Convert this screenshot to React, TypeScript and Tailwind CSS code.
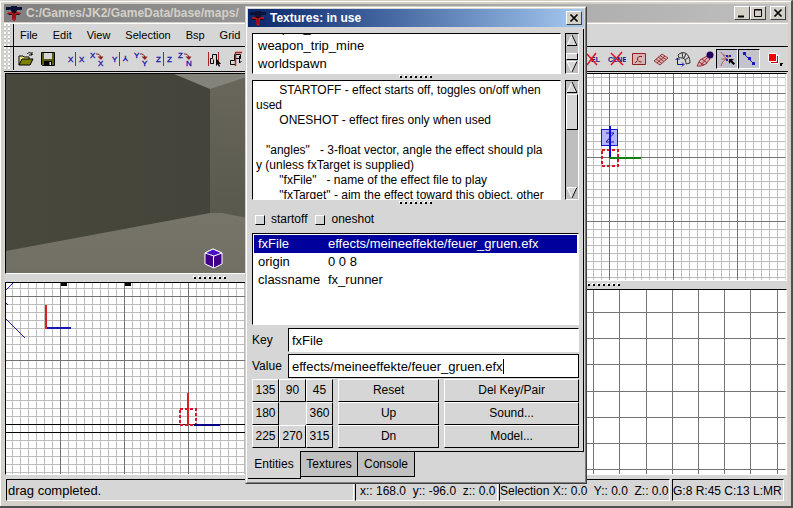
import React from "react";
import { clsx } from "clsx";

const sunken = "border border-t-black border-l-black border-b-white border-r-white";
const raised = "border border-t-white border-l-white border-b-black border-r-black";

function AppLogo() {
  return (
    <svg width="16" height="16" viewBox="0 0 16 16" className="shrink-0" aria-hidden="true">
      <path d="M0 2h5v-1h6v1h5v3h-5v1h-6v-1h-5z" fill="#0a1238" />
      <path d="M1 8h3l2-2h4l2 2h3l-2 2h-3v4l-2 2-2-2v-4h-3z" fill="#240810" />
      <path d="M2 8h3l2 1v5l1 1 1-1v-5l2-1h3" fill="none" stroke="#d81820" strokeWidth="1.3" />
    </svg>
  );
}

function WindowButton({ label, children }: { label: string; children: React.ReactNode }) {
  return (
    <button
      type="button"
      aria-label={label}
      className="flex h-3.5 w-4 items-center justify-center border border-t-white border-l-white border-b-[#404040] border-r-[#404040] bg-[#d4d0c8]"
    >
      <svg width="12" height="10" viewBox="0 0 12 10" fill="none" stroke="#000">
        {children}
      </svg>
    </button>
  );
}

const closeGlyph = <path d="M2.5 1.5l7 7M9.5 1.5l-7 7" strokeWidth="1.7" />;

function Grip() {
  return (
    <div className="w-2 bg-[radial-gradient(circle_at_1px_1px,#fff_1px,#a8a8a8_1px,#d6d6d6_2px)] bg-[size:4px_4px]" />
  );
}

function Dots({ className }: { className?: string }) {
  return (
    <svg width="34" height="4" viewBox="0 0 34 4" className={className} aria-hidden="true">
      {[0, 1, 2, 3, 4, 5, 6].map((i) => (
        <g key={i}>
          <rect x={i * 5} y="0" width="2" height="2" fill="#fff" />
          <rect x={i * 5 + 1} y="1" width="2" height="2" fill="#000" />
        </g>
      ))}
    </svg>
  );
}

function Tool({ label, pressed, children }: { label: string; pressed?: boolean; children: React.ReactNode }) {
  return (
    <button
      type="button"
      aria-label={label}
      aria-pressed={pressed}
      className={clsx(
        "flex h-5 w-[22px] shrink-0 items-center justify-center",
        pressed && "border border-t-black border-l-black border-b-white border-r-white bg-[#c3c3ce]",
      )}
    >
      <svg width="18" height="18" viewBox="0 0 18 18" className="shrink-0" fill="none">
        {children}
      </svg>
    </button>
  );
}

function Letter({ x, y, children }: { x: number; y: number; children: string }) {
  return (
    <text x={x} y={y} fontSize="8" fill="#1010a0" stroke="#1010a0" strokeWidth="0.3" fontFamily="Liberation Sans, sans-serif">
      {children}
    </text>
  );
}

function FlipIcon({ axis }: { axis: string }) {
  return (
    <>
      <Letter x={1} y={12}>{axis}</Letter>
      <g transform={axis === "Y" ? "rotate(180 14.5 9)" : undefined}>
        <Letter x={12} y={12}>{axis}</Letter>
      </g>
      <path d="M8.500 2v14" stroke="#b02020" />
    </>
  );
}

function RotateIcon({ axis, turned }: { axis: string; turned: string }) {
  return (
    <>
      <Letter x={1} y={8}>{axis}</Letter>
      <Letter x={9} y={16}>{turned}</Letter>
      <path d="M7 4c3-.5 4.500 1 5 4" stroke="#902020" />
      <path d="M8.500 6.500h6l-2.500 3.500z" fill="#902020" />
    </>
  );
}

function Toolbar() {
  return (
    <div className="flex h-[25px] border-b border-black bg-[#d6d6d6] pb-px">
      <Grip />
      <div className="ml-px flex flex-1 items-center justify-between border-l border-black">
        <div className="flex items-center pl-px">
          <Tool label="Open">
            <path d="M2 15V6h4l1 1h5v3" fill="#e8e480" stroke="#000" />
            <path d="M2 15l3-6h11l-3 6z" fill="#808000" stroke="#000" />
            <path d="M10 4c2-2 4-2 5 1M15 2v3h-3" stroke="#000" />
          </Tool>
          <Tool label="Save">
            <path d="M2.500 2.500h13v13h-12l-1-1z" fill="#5a5a14" stroke="#000" />
            <path d="M5 3h8v6h-8z" fill="#d6d6d6" />
            <path d="M5 11h8v5h-8z" fill="#000" />
            <path d="M10.500 12h1.500v3h-1.500z" fill="#d6d6d6" />
          </Tool>
          <div className="w-1.5" />
          <Tool label="Flip X"><FlipIcon axis="X" /></Tool>
          <Tool label="Rotate X"><RotateIcon axis="X" turned="X" /></Tool>
          <Tool label="Flip Y"><FlipIcon axis="Y" /></Tool>
          <Tool label="Rotate Y"><RotateIcon axis="Y" turned="Y" /></Tool>
          <Tool label="Flip Z"><FlipIcon axis="Z" /></Tool>
          <Tool label="Rotate Z"><RotateIcon axis="Z" turned="N" /></Tool>
          <div className="w-1.5" />
          <Tool label="Select complete tall">
            <path d="M3.500 2v14M13.500 2v14" stroke="#b02020" />
            <path d="M5.500 8.500h2v-4h4v9M5.500 8.500v5h3v-4" stroke="#000" />
            <path d="M11 8v8l2-2 1 3 1-1-1-2h2z" fill="#000" />
          </Tool>
          <Tool label="Select touching">
            <path d="M3.500 10.500h4v-6h6v4M3.500 10.500v4h5v-6h5" stroke="#000" />
            <path d="M8 2.500h7M8.500 3v13" stroke="#b02020" strokeWidth="1.500" />
            <path d="M12.500 6v7l2-2" stroke="#000" />
          </Tool>
        </div>
        <div className="flex items-center pr-0.5">
          <Tool label="Disable model selection">
            <text x="5" y="12" fontSize="7" fontWeight="bold" fill="#101080" fontFamily="Liberation Sans, sans-serif">EL</text>
            <path d="M1 4l10 11M10 3L1 15" stroke="#d81820" strokeWidth="1.500" />
          </Tool>
          <Tool label="Disable curve selection">
            <text x="0" y="12" fontSize="7" fontWeight="bold" fill="#101080" fontFamily="Liberation Sans, sans-serif">CLNE</text>
            <path d="M3 3l12 12M14 2L3 15" stroke="#e01020" strokeWidth="1.500" />
          </Tool>
          <Tool label="Patch bend mode">
            <path d="M2.500 3.500h13v11h-13z" fill="#dcb4b4" stroke="#902020" />
            <path d="M12 6.500c-3-.5-4.500.5-4.500 2.500s1.500 3 4 3M5 13l2-2" stroke="#702020" />
          </Tool>
          <Tool label="Patch mesh">
            <path d="M2 11l8-7 6 4-8 7zM4 9l6 4.500M6 7l6 4.500M8 5.500l6 4M5 13l8-7" fill="#e0b0b0" stroke="#802020" strokeWidth="0.800" />
          </Tool>
          <Tool label="Patch cap">
            <path d="M4 5c5-5 12-2 12 8l-4 1c0-5-3-7-7-6zM8 2.500l1 5.500M12 3.500l-2 5M15 7l-4 3" fill="#d6d6d6" stroke="#202020" strokeWidth="0.900" />
            <path d="M3.500 8v6.500h6M1.500 10l2-2 2 2M8 12.500l2 2-2 2" stroke="#1010a0" />
          </Tool>
          <Tool label="Patch weld">
            <path d="M1 16l3-6 7-4 3 3-4 5-5 2zM3 12l5 3M6 9l5 4M5 15l6-7" fill="#e0b0b0" stroke="#902030" strokeWidth="0.900" />
            <circle cx="14" cy="5" r="3.500" fill="#240060" />
          </Tool>
          <Tool label="Select vertices" pressed>
            <path d="M3 2c1 3 5 4 9 4M3 16c1-4 4-7 9-10M3 9h6M5 5l6 7" stroke="#b04040" strokeWidth="0.800" />
            <path d="M8 5h2v2h-2zM11 5h2v2h-2zM8 9h2v2h-2z" fill="#2020c0" />
            <path d="M11 9h5l-2 1.500 3 3-1.500 1.500-3-3-1.500 2z" fill="#000" />
          </Tool>
          <Tool label="Select edges" pressed>
            <path d="M4 4l10 10" stroke="#2020c0" />
            <path d="M3 2h3v3h-3zM8 7h3v3h-3zM12 12h3v3h-3z" fill="#1818c8" />
          </Tool>
          <div className="w-1" />
          <Tool label="Texture mode">
            <path d="M4.500 5.500h8v8h-8z" fill="#c00010" stroke="#fff" />
            <path d="M2.500 3.500h8v8h-8z" fill="#f00008" stroke="#fff" />
            <path d="M14 13h3v1h-1v2h-2z" fill="#000" />
          </Tool>
        </div>
      </div>
    </div>
  );
}

function CameraView() {
  return (
    <svg width="100%" height="100%" className="block bg-[#47463b]" role="img" aria-label="Camera view">
      <defs>
        <linearGradient id="wallLeft" x1="0" x2="1">
          <stop offset="0" stopColor="#49483d" />
          <stop offset="1" stopColor="#45443a" />
        </linearGradient>
        <linearGradient id="wallRight" x1="0" x2="0" y1="0" y2="1">
          <stop offset="0" stopColor="#69675b" />
          <stop offset="1" stopColor="#57564b" />
        </linearGradient>
        <linearGradient id="floor" x1="0" x2="0" y1="0" y2="1">
          <stop offset="0" stopColor="#77756a" />
          <stop offset="1" stopColor="#68665b" />
        </linearGradient>
      </defs>
      <rect width="206" height="200" fill="url(#wallLeft)" />
      <rect x="204" width="300" height="170" fill="url(#wallRight)" />
      <path d="M168 0L204 15L250 0z" fill="#84837a" />
      <path d="M0 177L204 139L216 139L420 178V300H0z" fill="url(#floor)" />
      <g stroke="#fff" strokeLinejoin="round">
        <path d="M199 179l8-4 9 4v11l-8 4-9-4z" fill="#40008c" />
        <path d="M199 179l9 3 8-3-9-4z" fill="#4a10c8" />
        <path d="M207.500 182v12" />
      </g>
    </svg>
  );
}

function GridPatterns({ id, x, y }: { id: string; x: number; y: number }) {
  return (
    <defs>
      <pattern id={id + "Minor"} x={x} y={y} width="8" height="8" patternUnits="userSpaceOnUse">
        <path d="M0 0h8v1h-7v7h-1z" fill="#bcbcbc" />
      </pattern>
      <pattern id={id + "Major"} x={x} y={y} width="64" height="64" patternUnits="userSpaceOnUse">
        <path d="M0 0h64v1h-63v63h-1z" fill="#747474" />
      </pattern>
    </defs>
  );
}

function FrontView() {
  return (
    <svg width="100%" height="100%" className="block" role="img" aria-label="XZ view">
      <GridPatterns id="front" x={54} y={13} />
      <rect width="100%" height="100%" fill="url(#frontMinor)" />
      <rect width="100%" height="100%" fill="url(#frontMajor)" />
      <path d="M55 0h6v3h-6zM119 0h6v3h-6z" fill="#000" />
      <path d="M0 7l7-7M0 36l19 19M0 20l2 2" stroke="#1c1ca8" />
      <rect x="39" y="22" width="2" height="24" fill="#d82020" />
      <rect x="41" y="44" width="24" height="2" fill="#1818b0" />
      <rect y="141" width="100%" height="1" fill="#000" />
      <rect y="149" width="100%" height="1" fill="#000" />
      <rect x="174" y="126" width="16" height="16" fill="none" stroke="#d01828" strokeWidth="2" strokeDasharray="3 2" />
      <rect x="181" y="110" width="2" height="32" fill="#d82020" />
      <rect x="188" y="141" width="26" height="2" fill="#000080" />
    </svg>
  );
}

function TopView() {
  return (
    <svg width="100%" height="100%" className="block" role="img" aria-label="YZ view">
      <GridPatterns id="side" x={188} y={19} />
      <rect width="100%" height="100%" fill="url(#sideMinor)" />
      <rect width="100%" height="100%" fill="url(#sideMajor)" />
      <rect x="180.500" y="55.500" width="16" height="16" fill="#b4b4ff" stroke="#1818d0" />
      <path d="M185 59h8l-8 9h8" fill="none" stroke="#1818a0" />
      <rect x="181" y="76" width="16" height="16" fill="none" stroke="#d01828" strokeWidth="2" strokeDasharray="3 2" />
      <rect x="188" y="52" width="2" height="32" fill="#0808e0" />
      <rect x="189" y="83" width="31" height="2" fill="#108010" />
    </svg>
  );
}

function TextureView() {
  const steps = Array.from({ length: 40 }, (_, i) => Math.round(15 + i * 26.200));
  return (
    <svg width="100%" height="100%" className="block" role="img" aria-label="Texture view">
      {steps.map((p) => (
        <g key={p} fill="#747474">
          <rect x={p} y="0" width="1" height="100%" />
          <rect x="0" y={p + 7} width="100%" height="1" />
        </g>
      ))}
    </svg>
  );
}

function Pane({ className, children }: { className: string; children: React.ReactNode }) {
  return (
    <div className={clsx("min-h-0 overflow-hidden border border-t-black border-l-black border-b-white border-r-white bg-white", className)}>
      {children}
    </div>
  );
}

function Splitter() {
  return (
    <div className="flex h-2 items-center justify-center">
      <Dots />
    </div>
  );
}

function Scrollbar({ thumb }: { thumb: string }) {
  return (
    <div className="flex w-3.5 flex-col border border-t-black border-l-black border-b-white border-r-white bg-[#bebebe]">
      <svg width="12" height="13" viewBox="0 0 12 13" className="shrink-0" aria-hidden="true">
        <path d="M6 1L1 11.500H11z" fill="#d6d6d6" stroke="#fff" />
        <path d="M6 1L11 11.500H1" fill="none" stroke="#000" />
      </svg>
      <div className={clsx("bg-[#d6d6d6]", raised, thumb)} />
      <svg width="12" height="13" viewBox="0 0 12 13" className="mt-auto shrink-0" aria-hidden="true">
        <path d="M1 1.500H11L6 12z" fill="#d6d6d6" stroke="#fff" />
        <path d="M11 1.500L6 12" stroke="#000" />
      </svg>
    </div>
  );
}

const pairs = [
  ["fxFile", "effects/meineeffekte/feuer_gruen.efx"],
  ["origin", "0 0 8"],
  ["classname", "fx_runner"],
];

const angles = ["135", "90", "45", "180", "", "360", "225", "270", "315"];

const help = [
  "       STARTOFF - effect starts off, toggles on/off when",
  "used",
  "       ONESHOT - effect fires only when used",
  "",
  "   \"angles\"   - 3-float vector, angle the effect should pla",
  "y (unless fxTarget is supplied)",
  "       \"fxFile\"   - name of the effect file to play",
  "       \"fxTarget\" - aim the effect toward this object, other",
];

function PushButton({ children, className }: { children: string; className?: string }) {
  return (
    <button type="button" className={clsx("h-[23px] bg-[#d6d6d6] text-center", raised, className)}>
      {children}
    </button>
  );
}

function Spawnflag({ name }: { name: string }) {
  return (
    <label className="flex items-center gap-1.5">
      <input
        type="checkbox"
        className="size-2.5 appearance-none border border-t-white border-l-white border-b-black border-r-black bg-[#d6d6d6]"
      />
      {name}
    </label>
  );
}

function EntityDialog() {
  return (
    <section
      aria-label="Textures: in use"
      className="absolute top-[5px] left-[245px] w-[342px] border border-t-[#d4d0c8] border-l-[#d4d0c8] border-b-[#404040] border-r-[#404040] bg-[#d6d6d6]"
    >
      <div className="border border-t-white border-l-white border-b-[#808080] border-r-[#808080] p-px">
        <header className="flex h-[18px] items-center gap-1 bg-linear-to-r from-[#0a246a] to-[#a6caf0] pr-0.5 pl-0.5 font-bold text-white">
          <AppLogo />
          <h2 className="flex-1">Textures: in use</h2>
          <WindowButton label="Close">{closeGlyph}</WindowButton>
        </header>

        <div className="mt-0.5 border-r border-b border-black pt-1 pr-[3px] pb-[3px] pl-1">
          <div className="flex h-[41px] gap-1 pr-px">
            <ul className={clsx("flex flex-1 flex-col justify-end overflow-hidden bg-white text-[13px] leading-[18px]", sunken)}>
              {["weapon_thermal", "weapon_trip_mine", "worldspawn"].map((name) => (
                <li key={name} className="h-[18px] shrink-0 pl-[5px]">{name}</li>
              ))}
            </ul>
            <Scrollbar thumb="mt-1.5 h-2" />
          </div>
          <div className="flex h-[6px] items-center justify-center">
            <Dots />
          </div>
          <div className="flex h-[120px] gap-1 pr-px">
            <div className={clsx("flex-1 overflow-hidden bg-white pt-0.5 pl-[3px] leading-[15px] whitespace-pre", sunken)}>
              {help.map((line, i) => (
                <p key={i} className="h-[15px]">{line}</p>
              ))}
            </div>
            <Scrollbar thumb="h-9" />
          </div>
          <div className="flex h-[6px] items-center justify-center">
            <Dots />
          </div>

          <div className="flex h-[27px] items-center gap-2 pl-[3px]">
            <Spawnflag name="startoff" />
            <Spawnflag name="oneshot" />
          </div>

          <div className={clsx("mr-px h-[92px] bg-white p-px", sunken)}>
            <table className="w-full text-left text-[13px] leading-[18px]">
              <tbody>
                {pairs.map(([key, value], i) => (
                  <tr key={key} className={clsx("h-[18px]", i === 0 && "bg-[#00009c] text-white")}>
                    <th scope="row" className="w-[74px] p-0 pl-1 font-normal">{key}</th>
                    <td className="p-0">{value}</td>
                  </tr>
                ))}
              </tbody>
            </table>
          </div>

          <div className="mt-[3px] mr-px flex items-center">
            <label htmlFor="entity-key" className="w-9">Key</label>
            <input id="entity-key" defaultValue="fxFile" className={clsx("h-6 min-w-0 flex-1 bg-white px-[3px] text-[13px] outline-none", sunken)} />
          </div>
          <div className="mt-0.5 mr-px flex items-center">
            <label htmlFor="entity-value" className="w-9">Value</label>
            <div className="flex h-6 flex-1 items-center border border-black bg-white pl-[3px]">
              <input
                id="entity-value"
                defaultValue="effects/meineeffekte/feuer_gruen.efx"
                className="field-sizing-content h-5 bg-transparent text-[13px] outline-none"
              />
              <div className="h-[15px] w-px bg-black" />
            </div>
          </div>

          <div className="mt-px mr-px flex gap-[5px]">
            <div className="grid w-[81px] grid-cols-3">
              {angles.map((a) =>
                a ? <PushButton key={a}>{a}</PushButton> : <div key="centre" />,
              )}
            </div>
            <div className="grid flex-[102]">
              <PushButton>Reset</PushButton>
              <PushButton>Up</PushButton>
              <PushButton>Dn</PushButton>
            </div>
            <div className="grid flex-[136]">
              <PushButton>Del Key/Pair</PushButton>
              <PushButton>Sound...</PushButton>
              <PushButton>Model...</PushButton>
            </div>
          </div>
        </div>

        <div role="tablist" className="flex h-[29px] items-start">
          <button type="button" role="tab" aria-selected="true" className="-mt-px h-7 w-[53px] border-r border-b border-black bg-[#d6d6d6] text-center">
            Entities
          </button>
          <button type="button" role="tab" aria-selected="false" className="h-[25px] w-[57px] border-r border-b border-black bg-[#c0c0c0] text-center">
            Textures
          </button>
          <button type="button" role="tab" aria-selected="false" className="h-[25px] w-[57px] border-r border-b border-black bg-[#c0c0c0] text-center">
            Console
          </button>
        </div>
      </div>
    </section>
  );
}

export default function App() {
  return (
    <main className="relative flex h-screen flex-col overflow-hidden border-t border-r-2 border-b-2 border-t-[#d4d0c8] border-r-[#505050] border-b-[#505050] bg-[#d4d0c8] font-['Liberation_Sans',Arial,sans-serif] text-[12px] leading-[15px] text-black">
      <div className="flex min-h-0 flex-1 flex-col border-t border-l border-white pt-0.5 pr-[3px] pb-[5px] pl-[3px]">
        <header className="flex h-[18px] shrink-0 items-center gap-1 bg-linear-to-r from-[#808080] to-[#c0c0c0] pr-0.5 pl-0.5 font-bold text-[#d4d0c8]">
          <AppLogo />
          <h1 className="w-[218px]">C:/Games/JK2/GameData/base/maps/</h1>
          <div className="ml-auto flex">
            <WindowButton label="Minimize"><path d="M2 8.500h6" strokeWidth="2" /></WindowButton>
            <WindowButton label="Maximize"><path d="M2.500 1.500h7v7h-7zM2 2h8" /></WindowButton>
          </div>
          <WindowButton label="Close">{closeGlyph}</WindowButton>
        </header>

        <div className="mt-px flex h-6 shrink-0 border-t border-b border-t-white border-b-black bg-[#d6d6d6]">
          <Grip />
          <nav className="ml-px flex flex-1 items-center gap-[15px] border-l border-black pl-1.5 text-[11px]">
            {["File", "Edit", "View", "Selection", "Bsp", "Grid"].map((m) => (
              <button key={m} type="button">{m}</button>
            ))}
          </nav>
        </div>
        <Toolbar />

        <div className="flex min-h-0 flex-1 gap-[5px] bg-[#d6d6d6] pt-px pr-px pl-px">
          <div className="flex min-w-0 flex-[411] flex-col">
            <Pane className="flex-[201]"><CameraView /></Pane>
            <Splitter />
            <Pane className="flex-[193]"><FrontView /></Pane>
          </div>
          <div className="flex min-w-0 flex-[367] flex-col">
            <Pane className="flex-[208]"><TopView /></Pane>
            <Splitter />
            <Pane className="flex-[186]"><TextureView /></Pane>
          </div>
        </div>

        <footer className="flex h-[26px] shrink-0 gap-px bg-[#d6d6d6] pt-1 pr-1 pl-0.5 leading-[22px] whitespace-pre">
          <div className={clsx("flex-1 pl-px text-[13px]", sunken)}>drag completed.</div>
          <div className={clsx("w-[143px] pl-1", sunken)}>x:: 168.0  y:: -96.0  z:: 0.0</div>
          <div className={clsx("mr-px w-[171px]", sunken)}>Selection X:: 0.0  Y:: 0.0  Z:: 0.0</div>
          <div className={clsx("w-[112px]", sunken)}>G:8 R:45 C:13 L:MR</div>
        </footer>
      </div>

      <EntityDialog />
    </main>
  );
}
